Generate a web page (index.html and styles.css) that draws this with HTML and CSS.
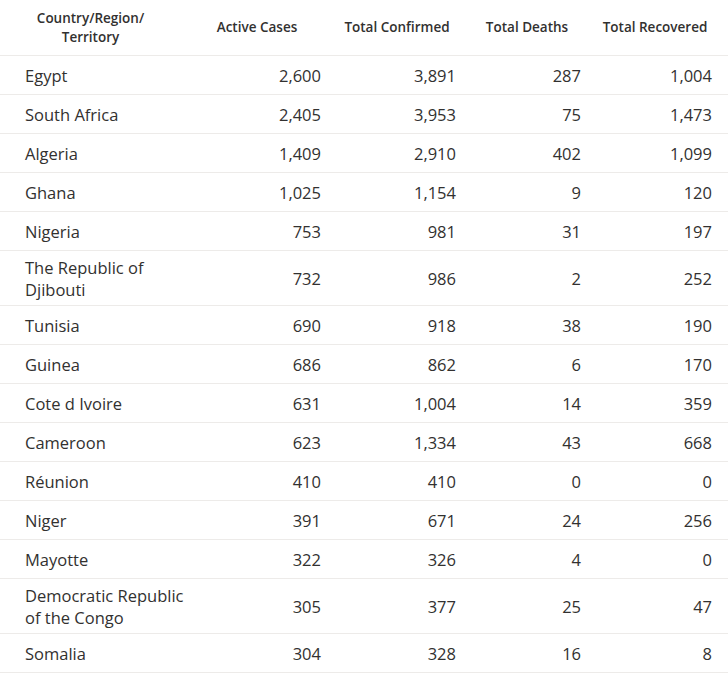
FILE: index.html
```html
<!DOCTYPE html>
<html lang="en">
<head>
<meta charset="utf-8">
<title>Cases table</title>
<link rel="stylesheet" href="styles.css">
</head>
<body>
<div class="table">
  <div class="row head">
    <div class="cell c1">Country/Region/<br>Territory</div>
    <div class="cell">Active Cases</div>
    <div class="cell">Total Confirmed</div>
    <div class="cell">Total Deaths</div>
    <div class="cell">Total Recovered</div>
  </div>
  <div class="row"><div class="cell c1">Egypt</div><div class="cell num">2,600</div><div class="cell num">3,891</div><div class="cell num">287</div><div class="cell num">1,004</div></div>
  <div class="row"><div class="cell c1">South Africa</div><div class="cell num">2,405</div><div class="cell num">3,953</div><div class="cell num">75</div><div class="cell num">1,473</div></div>
  <div class="row"><div class="cell c1">Algeria</div><div class="cell num">1,409</div><div class="cell num">2,910</div><div class="cell num">402</div><div class="cell num">1,099</div></div>
  <div class="row"><div class="cell c1">Ghana</div><div class="cell num">1,025</div><div class="cell num">1,154</div><div class="cell num">9</div><div class="cell num">120</div></div>
  <div class="row"><div class="cell c1">Nigeria</div><div class="cell num">753</div><div class="cell num">981</div><div class="cell num">31</div><div class="cell num">197</div></div>
  <div class="row"><div class="cell c1">The Republic of<br>Djibouti</div><div class="cell num">732</div><div class="cell num">986</div><div class="cell num">2</div><div class="cell num">252</div></div>
  <div class="row"><div class="cell c1">Tunisia</div><div class="cell num">690</div><div class="cell num">918</div><div class="cell num">38</div><div class="cell num">190</div></div>
  <div class="row"><div class="cell c1">Guinea</div><div class="cell num">686</div><div class="cell num">862</div><div class="cell num">6</div><div class="cell num">170</div></div>
  <div class="row"><div class="cell c1">Cote d Ivoire</div><div class="cell num">631</div><div class="cell num">1,004</div><div class="cell num">14</div><div class="cell num">359</div></div>
  <div class="row"><div class="cell c1">Cameroon</div><div class="cell num">623</div><div class="cell num">1,334</div><div class="cell num">43</div><div class="cell num">668</div></div>
  <div class="row"><div class="cell c1">Réunion</div><div class="cell num">410</div><div class="cell num">410</div><div class="cell num">0</div><div class="cell num">0</div></div>
  <div class="row"><div class="cell c1">Niger</div><div class="cell num">391</div><div class="cell num">671</div><div class="cell num">24</div><div class="cell num">256</div></div>
  <div class="row"><div class="cell c1">Mayotte</div><div class="cell num">322</div><div class="cell num">326</div><div class="cell num">4</div><div class="cell num">0</div></div>
  <div class="row"><div class="cell c1">Democratic Republic<br>of the Congo</div><div class="cell num">305</div><div class="cell num">377</div><div class="cell num">25</div><div class="cell num">47</div></div>
  <div class="row"><div class="cell c1">Somalia</div><div class="cell num">304</div><div class="cell num">328</div><div class="cell num">16</div><div class="cell num">8</div></div>
</div>
</body>
</html>
```
FILE: styles.css
```css
html, body {
  margin: 0;
  padding: 0;
  background: #ffffff;
}
body {
  font-family: "Open Sans", "Noto Sans", "Liberation Sans", sans-serif;
  color: #323130;
}
.table {
  width: 728px;
}
.row {
  display: grid;
  grid-template-columns: 192px 145px 135px 125px 131px;
  border-bottom: 1px solid #edebe9;
}
.cell {
  display: flex;
  align-items: center;
  min-height: 38px;
  box-sizing: border-box;
  padding: 6px 16px 4px;
  font-size: 16.5px;
  line-height: 22px;
  white-space: nowrap;
}
.cell.c1 {
  padding-left: 25px;
}
.cell.num {
  justify-content: flex-end;
}
.head .cell {
  min-height: 55px;
  font-size: 13.5px;
  font-weight: 600;
  line-height: 19px;
  justify-content: center;
  text-align: center;
  padding: 0 36px 0 21px;
}
.head .cell.c1 {
  padding-left: 25px;
}
```
